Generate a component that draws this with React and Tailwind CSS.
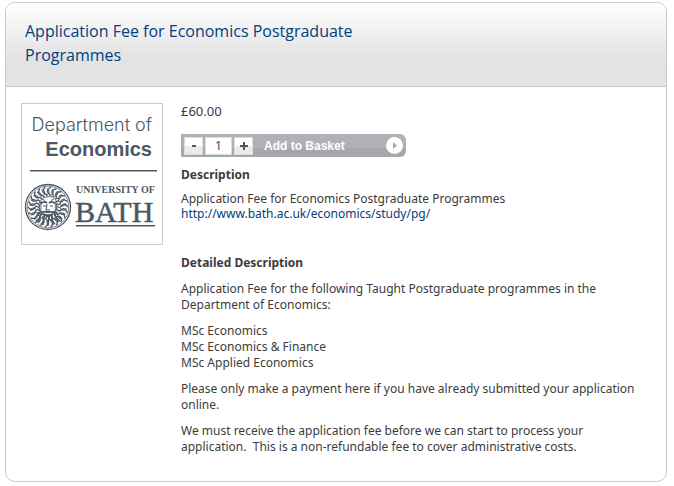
import { useState } from "react";

const programmes = ["MSc Economics", "MSc Economics & Finance", "MSc Applied Economics"];

// wavy strands of hair around the head in the crest
const strands = Array.from({ length: 22 }, (_, i) => (i * 360) / 22);

function Crest() {
  return (
    <g transform="translate(26 103)" fill="none" stroke="#4b5864">
      <circle r="22.5" strokeWidth="1.3" />
      <circle r="20.8" strokeWidth="0.7" />
      {strands.map((angle) => (
        <g key={angle} transform={`rotate(${angle})`}>
          <path d="M-1-8c4-2 4-4 1.500-6S0-18 3-20" strokeWidth="1.4" />
          <path d="M3-12c3-1.500 3-4 1-6" strokeWidth="1" />
        </g>
      ))}
      <path d="M-7-7C-5-11 6-12 8-7L7 4C5 9-5 9-7 4z" fill="#fff" strokeWidth="0.8" />
      <path d="M-6-8l3 1.500M6-8L3-6.500" strokeWidth="0.9" />
      <path d="M-7-3.500q3-3 6-.5M1-4q3-2.500 6 .5" strokeWidth="1.8" />
      <path d="M-5-1h3M2-1h3M-1-3l-1 6h4" strokeWidth="1.1" />
      <path d="M-10 8q1-4 10-3q9-1 10 3M-4 7.500q4 2 8 0" strokeWidth="1.8" />
      <path d="M-7 7q-1 5-5 7M-4 9q1 5-3 8M0 9q2 4-1 9M4 9q-1 4 3 8M7 7q1 5 5 7" strokeWidth="1.5" />
    </g>
  );
}

function DepartmentLogo() {
  return (
    <svg
      viewBox="0 0 140 140"
      role="img"
      aria-label="Department of Economics, University of Bath"
      className="block h-[140px] w-[140px]"
      fill="#4b5864"
    >
      <text x="130" y="27" textAnchor="end" className="font-['Inter','Liberation_Sans',sans-serif] text-[18px] font-light">
        Department of
      </text>
      <text x="130" y="52" textAnchor="end" className="font-['Liberation_Sans',sans-serif] text-[20px] font-bold">
        Economics
      </text>
      <path d="M8 66h127v1.500H8z" />
      <Crest />
      <text x="54" y="89" className="font-['Liberation_Serif',serif] text-[10px] font-bold">
        UNIVERSITY OF
      </text>
      <text x="53" y="118" className="font-['Liberation_Serif',serif] text-[30px]" stroke="#4b5864" strokeWidth="0.5">
        BATH
      </text>
      <path d="M54 121h79v1.500H54z" />
    </svg>
  );
}

function BasketForm() {
  const [quantity, setQuantity] = useState(1);

  return (
    <form
      onSubmit={(e) => e.preventDefault()}
      className="mt-[15px] flex h-[23px] w-[225px] items-center gap-0.5 rounded-r-md bg-[linear-gradient(#afb1b7_60%,#a5a7ad_60%)] pr-[3px] pl-[3px] text-white"
    >
      <button
        type="button"
        aria-label="Decrease quantity"
        onClick={() => setQuantity(Math.max(1, quantity - 1))}
        className="flex h-[18px] w-[19px] shrink-0 items-center justify-center border border-[#ddd] bg-[linear-gradient(#fff_50%,#ece9e9_50%)]"
      >
        <svg viewBox="0 0 8 8" className="h-[8px] w-[8px]" fill="#555">
          <path d="M2 3h4v2H2z" />
        </svg>
      </button>
      <input
        aria-label="Quantity"
        value={quantity}
        onChange={(e) => setQuantity(Number(e.target.value) || 1)}
        className="h-[18px] w-[27px] shrink-0 border border-[#ddd] bg-white text-center text-xs text-[#444]"
      />
      <button
        type="button"
        aria-label="Increase quantity"
        onClick={() => setQuantity(quantity + 1)}
        className="flex h-[18px] w-[19px] shrink-0 items-center justify-center border border-[#ddd] bg-[linear-gradient(#fff_50%,#ece9e9_50%)]"
      >
        <svg viewBox="0 0 8 8" className="h-[8px] w-[8px]" fill="#555">
          <path d="M0 3h3V0h2v3h3v2H5v3H3V5H0z" />
        </svg>
      </button>
      <button
        type="submit"
        className="flex h-full grow items-center justify-between pl-[9px] font-['Liberation_Sans',sans-serif] text-xs font-bold"
      >
        Add to Basket
        <svg viewBox="0 0 17 17" className="h-[17px] w-[17px]">
          <circle cx="8.5" cy="8.5" r="8.5" fill="#fff" />
          <path d="M7 5l4 3.500L7 12z" fill="#a5a7ad" />
        </svg>
      </button>
    </form>
  );
}

export default function App() {
  return (
    <main className="mt-0.5 mr-[7px] ml-[5px] overflow-hidden rounded-[10px] border border-[#ccc] bg-white font-['Noto_Sans',sans-serif] text-xs leading-4 text-[#3c3c3c]">
      <header className="border-b border-[#c8c8c8] bg-[linear-gradient(#fff,#e3e3e3_65%)] px-[19px] pt-4 pb-[19px]">
        <h1 className="max-w-[360px] font-['Open_Sans',sans-serif] text-base leading-6 text-[#00407f]">
          Application Fee for Economics Postgraduate Programmes
        </h1>
      </header>

      <div className="flex items-start gap-[18px] pt-4 pr-[15px] pb-[26px] pl-[15px]">
        <div className="shrink-0 border border-[#ccc]">
          <DepartmentLogo />
        </div>

        <div className="min-w-0 grow">
          <p className="text-[13px] leading-4">£60.00</p>
          <BasketForm />

          <h2 className="mt-2.5 font-bold">Description</h2>
          <p className="mt-2 leading-[15px]">
            Application Fee for Economics Postgraduate Programmes
            <br />
            <a href="http://www.bath.ac.uk/economics/study/pg/" className="text-[#00407f]">
              http://www.bath.ac.uk/economics/study/pg/
            </a>
          </p>

          <h2 className="mt-[34px] font-bold">Detailed Description</h2>
          <div className="mt-2.5 space-y-2.5">
            <p>
              Application Fee for the following Taught Postgraduate programmes in the Department of
              Economics:
            </p>
            <ul>
              {programmes.map((name) => (
                <li key={name}>{name}</li>
              ))}
            </ul>
            <p>Please only make a payment here if you have already submitted your application online.</p>
            <p>
              We must receive the application fee before we can start to process your
              application.&nbsp; This is a non-refundable fee to cover administrative costs.
            </p>
          </div>
        </div>
      </div>
    </main>
  );
}
